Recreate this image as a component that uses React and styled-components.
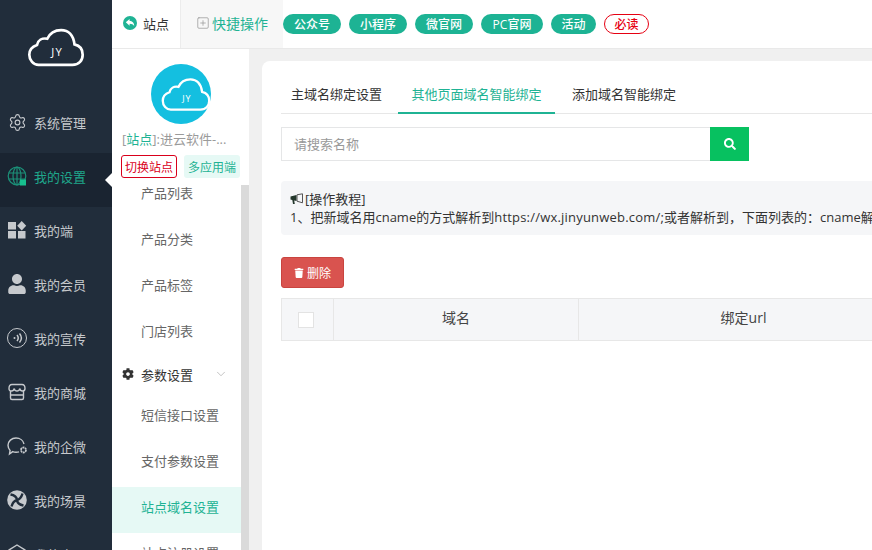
import React from 'react';
import styled, { createGlobalStyle } from 'styled-components';
import { FaCog, FaSearch, FaTrash, FaUser } from 'react-icons/fa';
import { Settings, ChevronDown, SquarePlus } from 'lucide-react';

const Global = createGlobalStyle`
  html, body { margin: 0; padding: 0; width: 872px; height: 550px; overflow: hidden; background: #f0f0f0; }
  * { box-sizing: border-box; }
  body { font-family: "Open Sans", "Noto Sans CJK SC", sans-serif; font-size: 13px; color: #333; }
`;

const Page = styled.div`display: flex; width: 872px; height: 550px; overflow: hidden;`;
const Rail = styled.aside`width: 112px; flex: none; background: #212d3b; color: #ccc; display: flex; flex-direction: column; overflow: hidden;`;
const LogoBox = styled.div`height: 99px; flex: none; display: flex; justify-content: center; align-items: flex-start; padding-top: 28px;`;
const RailItem = styled.div`
  position: relative; height: 54px; flex: none; display: flex; align-items: center; padding: 0 0 8px 7px; gap: 7px;
  background: ${p => (p.$active ? '#1a2431' : 'transparent')};
  color: ${p => (p.$active ? '#1fa88c' : '#c6c9cd')};
  ${p => p.$active && `&::after { content: ""; position: absolute; right: 0; top: 20px; border: 7px solid transparent; border-right-color: #fff; border-left-width: 0; }`}
`;
const RailIcon = styled.span`width: 20px; height: 20px; flex: none; display: flex; align-items: center; justify-content: center;`;
const RailLabel = styled.span`white-space: nowrap;`;

const Main = styled.div`flex: 1; min-width: 0; display: flex; flex-direction: column;`;
const TopBar = styled.header`height: 49px; flex: none; background: #fff; border-bottom: 1px solid #e9e9e9; display: flex; align-items: stretch;`;
const SiteTab = styled.div`width: 69px; flex: none; display: flex; align-items: center; gap: 6px; padding: 0 0 2px 11px; border-right: 1px solid #ececec; color: #333;`;
const QuickTab = styled.div`width: 102px; flex: none; background: #f7f7f7; display: flex; align-items: center; padding: 0 0 2px 15px; gap: 2px; color: #1fb394; font-size: 14px; white-space: nowrap;`;
const Pills = styled.div`display: flex; align-items: center; gap: 8px; padding-bottom: 1px;`;
const Pill = styled.span`
  height: 20px; border-radius: 10px; display: flex; align-items: center; justify-content: center; font-size: 12px; font-weight: 500; white-space: nowrap; flex: none;
  background: ${p => (p.$outline ? '#fff' : '#1db394')}; color: ${p => (p.$outline ? '#e60012' : '#fff')};
  border: ${p => (p.$outline ? '1px solid #e60012' : 'none')};
  width: ${p => p.$w}px;
`;
const Body = styled.div`flex: 1; min-height: 0; display: flex;`;
const SubNav = styled.nav`width: 137px; flex: none; background: #fff; display: flex; flex-direction: column; overflow: hidden;`;
const SubHead = styled.div`height: 136px; flex: none; padding-top: 15px; display: flex; flex-direction: column; align-items: center;`;
const Avatar = styled.div`width: 60px; height: 60px; border-radius: 50%; background: #14bfe0; display: flex; align-items: center; justify-content: flex-end; flex: none;`;
const SiteName = styled.div`width: 100%; padding-left: 10px; margin-top: 5px; line-height: 20px; color: #9a9a9a; white-space: nowrap;`;
const SiteKey = styled.span`color: #1fb394;`;
const SwitchRow = styled.div`width: 100%; display: flex; gap: 7px; padding-left: 9px; margin-top: 6px;`;
const SwitchBtn = styled.span`
  height: 23px; width: 56px; display: flex; align-items: center; justify-content: center; font-size: 12px; border-radius: 3px; flex: none;
  color: ${p => (p.$red ? '#d9001b' : '#1fb394')}; background: ${p => (p.$red ? '#fff' : '#e6f9f5')};
  border: ${p => (p.$red ? '1px solid #d9001b' : 'none')};
`;
const ScrollWrap = styled.div`flex: 1; min-height: 0; display: flex; overflow: hidden;`;
const SubList = styled.div`flex: 1; min-width: 0; margin-top: -12px;`;
const SubItem = styled.div`
  height: 46px; display: flex; align-items: center; padding: 0 0 8px 29px; color: ${p => (p.$active ? '#1fb394' : '#666')};
  background: ${p => (p.$active ? '#e6f9f5' : 'transparent')}; white-space: nowrap;
`;
const SubGroup = styled.div`
  height: 38px; display: flex; align-items: center; padding: 0 0 4px 10px; color: #333; gap: 7px; position: relative; white-space: nowrap;
`;
const GroupChevron = styled.span`position: absolute; right: 13px; top: 10px; color: #aaa; display: flex;`;
const Scrollbar = styled.div`width: 8px; flex: none; background: #dadada;`;

const Content = styled.main`flex: 1; min-width: 0; padding: 12px 0 0 13px; background: #f0f0f0; overflow: hidden;`;
const Card = styled.section`width: 660px; height: 600px; background: #fff; border-radius: 8px 0 0 0; padding: 17px 0 0 19px;`;
const TabBar = styled.div`display: flex; height: 36px; border-bottom: 1px solid #e7e7e7;`;
const TabItem = styled.div`
  flex: none; height: 36px; display: flex; align-items: center; justify-content: center; width: ${p => p.$w}px; padding-bottom: 5px; margin-right: ${p => p.$mr || 0}px;
  color: ${p => (p.$active ? '#1fb394' : '#333')}; box-shadow: ${p => (p.$active ? 'inset 0 -2px 0 #1fb394' : 'none')}; white-space: nowrap;
`;
const SearchRow = styled.div`display: flex; margin-top: 13px;`;
const SearchInput = styled.div`width: 429px; height: 34px; border: 1px solid #e5e6e7; border-right: none; color: #999; display: flex; align-items: center; padding: 0 0 2px 12px;`;
const SearchBtn = styled.div`width: 39px; height: 34px; background: #07c160; color: #fff; display: flex; align-items: center; justify-content: center;`;
const Notice = styled.div`margin-top: 20px; height: 54px; background: #f5f6f8; padding: 9px 0 0 9px; line-height: 18px; white-space: nowrap; overflow: hidden; border-radius: 4px 0 0 4px; color: #333;`;
const NoticeTitle = styled.div`display: flex; align-items: center;`;
const Url = styled.span`letter-spacing: 0.2px;`;
const Del = styled.div`margin-top: 22px; width: 63px; height: 31px; background: #d9534f; border: 1px solid #c9443f; border-radius: 3px; color: #fff; font-size: 12px; display: flex; align-items: center; justify-content: center; gap: 3px;`;
const TableHead = styled.div`margin-top: 10px; display: flex; height: 43px; background: #f5f6f8; border-top: 1px solid #e7e7e7; border-bottom: 1px solid #e7e7e7; font-size: 14px; color: #444;`;
const CheckCell = styled.div`flex: none; width: 53px; display: flex; align-items: center; justify-content: center; padding-right: 4px; border-left: 1px solid #e7e7e7; border-right: 1px solid #e7e7e7;`;
const Cell = styled.div`flex: none; width: ${p => p.$w}px; display: flex; align-items: center; justify-content: center; padding-bottom: 5px; border-right: 1px solid #e7e7e7;`;
const Check = styled.span`width: 16px; height: 16px; background: #fff; border: 1px solid #e3e3e3;`;

const Cloud = ({ w, h, size = 10 }) => (
  <svg width={w} height={h} viewBox="0 0 56 38" fill="none">
    <path d="M11 36h33c6.500 0 10-4.500 10-10 0-5.500-3.500-9-8-10C45 7 40 2 33 2c-6 0-11 3-13.500 8.500-5-1-9 1.500-10 6C5 18 2 21.500 2 26c0 5.500 4 10 9 10z" stroke="#fff" strokeWidth="2.600" />
    <text x="29" y="27" textAnchor="middle" fontSize={size} fill="#fff" fontFamily="Open Sans, sans-serif" letterSpacing="1">JY</text>
  </svg>
);

const BackIcon = () => (
  <svg width="14" height="14" viewBox="0 0 14 14">
    <circle cx="7" cy="7" r="7" fill="#1fb394" />
    <path d="M2.800 6.200 6.600 3v2.100c2.600 0 4.600 1.500 4.600 5-1-1.700-2.400-2.400-4.600-2.400v2z" fill="#fff" />
  </svg>
);

const Megaphone = () => (
  <svg width="15" height="12" viewBox="0 0 15 12">
    <path d="M.500 3.500 6.500 2v6L4.200 7.500 4.800 11 3 11 2.300 7 .500 6.500z" fill="#24382c" />
    <path d="M7 1.800 12.500 .8v9L7 8.200z" fill="none" stroke="#555" strokeWidth="1" />
  </svg>
);

const stroke = { fill: 'none', stroke: 'currentColor', strokeWidth: 1.400 };
const icons = {
  gear: <Settings size={19} strokeWidth={1.400} />,
  globe: (
    <svg width="20" height="20" viewBox="0 0 20 20" fill="none" stroke="#1c8f78" strokeWidth="1.200">
      <circle cx="10" cy="10" r="8.800" />
      <ellipse cx="10" cy="10" rx="4" ry="8.800" />
      <path d="M1.500 7h17M1.500 13h17M10 1v18" />
      <path d="M13 13.500h6v6h-6z" fill="#17c08e" stroke="none" />
    </svg>
  ),
  apps: (
    <svg width="20" height="20" viewBox="0 0 20 20" fill="currentColor">
      <rect x="1" y="2" width="8" height="7.500" /><rect x="1" y="11" width="8" height="7.500" /><rect x="11" y="11" width="7.500" height="7.500" />
      <path d="M14.700 1l4.500 4.700-4.500 4.700-4.500-4.700z" />
    </svg>
  ),
  user: <FaUser size={20} />,
  wave: (
    <svg width="20" height="20" viewBox="0 0 20 20" {...stroke}>
      <circle cx="10" cy="10" r="9.500" strokeWidth="1" />
      <circle cx="7.500" cy="10" r="1" fill="currentColor" stroke="none" />
      <path d="M10 7c1.500 1.800 1.500 4.200 0 6M12.500 5.500c2.300 2.700 2.300 6.300 0 9" strokeWidth="1.500" />
    </svg>
  ),
  shop: (
    <svg width="18" height="18" viewBox="0 0 18 18" {...stroke}>
      <path d="M4 1.500h10c2 0 3 2 3 4s-1 2.500-2.500 2.500S12 7 11.700 5.500C11.500 7 10.500 8 9 8S6.500 7 6.300 5.500C6 7 5 8 3.500 8S1 7.500 1 5.500s1-4 3-4z" />
      <path d="M2.500 8v7c0 .800.500 1.500 1.500 1.500h10c1 0 1.500-.7 1.500-1.500V8M2.500 12h13" />
    </svg>
  ),
  chat: (
    <svg width="22" height="20" viewBox="0 0 22 20" {...stroke} style={{ marginLeft: 2, flex: 'none' }}>
      <path d="M12 15.800c-.9.300-1.900.400-3 .400-1.200 0-2.300-.2-3.300-.6L2.500 18l.6-3.600C1.800 13 1 11.300 1 9.300 1 5.200 4.600 2 9 2c4 0 7.300 2.500 8 6" />
      <circle cx="16.500" cy="14" r="2.500" strokeWidth="1.800" strokeDasharray="2 .6" />
    </svg>
  ),
  scene: (
    <svg width="20" height="20" viewBox="0 0 20 20">
      <circle cx="10" cy="10" r="9.800" fill="currentColor" />
      <path d="M3.500 4.500Q9.500 5.500 10 10t6.500 5.500M15.500 3.500Q14 9 10 10t-5.500 6.500" fill="none" stroke="#212d3b" strokeWidth="2.400" />
    </svg>
  ),
  cube: (
    <svg width="20" height="20" viewBox="0 0 20 20" {...stroke}><path d="M10 1l8 5v8l-8 5-8-5V6z" /></svg>
  ),
};

const railItems = [
  ['gear', '系统管理'], ['globe', '我的设置', true], ['apps', '我的端'], ['user', '我的会员'], ['wave', '我的宣传'],
  ['shop', '我的商城'], ['chat', '我的企微'], ['scene', '我的场景'], ['cube', '我的应用'],
];

export default function App() {
  return (
    <Page>
      <Global />
      <Rail>
        <LogoBox><Cloud w={58} h={39} size={11} /></LogoBox>
        {railItems.map(([ic, label, active]) => (
          <RailItem key={label} $active={active}>
            <RailIcon>{icons[ic]}</RailIcon>
            <RailLabel>{label}</RailLabel>
          </RailItem>
        ))}
      </Rail>
      <Main>
        <TopBar>
          <SiteTab><BackIcon /><span>站点</span></SiteTab>
          <QuickTab><SquarePlus size={14} color="#999" strokeWidth={1.300} /><span>快捷操作</span></QuickTab>
          <Pills>
            <Pill $w={58}>公众号</Pill><Pill $w={58}>小程序</Pill><Pill $w={58}>微官网</Pill><Pill $w={62}>PC官网</Pill><Pill $w={45}>活动</Pill><Pill $w={45} $outline>必读</Pill>
          </Pills>
        </TopBar>
        <Body>
          <SubNav>
            <SubHead>
              <Avatar><Cloud w={50} h={35} /></Avatar>
              <SiteName>[<SiteKey>站点</SiteKey>]:进云软件-...</SiteName>
              <SwitchRow>
                <SwitchBtn $red>切换站点</SwitchBtn>
                <SwitchBtn>多应用端</SwitchBtn>
              </SwitchRow>
            </SubHead>
            <ScrollWrap>
              <SubList>
                <SubItem>产品列表</SubItem>
                <SubItem>产品分类</SubItem>
                <SubItem>产品标签</SubItem>
                <SubItem>门店列表</SubItem>
                <SubGroup>
                  <FaCog size={12} />
                  <span>参数设置</span>
                  <GroupChevron><ChevronDown size={14} strokeWidth={1.200} /></GroupChevron>
                </SubGroup>
                <SubItem>短信接口设置</SubItem>
                <SubItem>支付参数设置</SubItem>
                <SubItem $active>站点域名设置</SubItem>
                <SubItem>站点注册设置</SubItem>
              </SubList>
              <Scrollbar />
            </ScrollWrap>
          </SubNav>
          <Content>
            <Card>
              <TabBar>
                <TabItem $w={111} $mr={6}>主域名绑定设置</TabItem>
                <TabItem $w={157} $active>其他页面域名智能绑定</TabItem>
                <TabItem $w={138}>添加域名智能绑定</TabItem>
              </TabBar>
              <SearchRow>
                <SearchInput>请搜索名称</SearchInput>
                <SearchBtn><FaSearch size={12} /></SearchBtn>
              </SearchRow>
              <Notice>
                <NoticeTitle><Megaphone /><span>[操作教程]</span></NoticeTitle>
                <div>1、把新域名用cname的方式解析到<Url>https://wx.jinyunweb.com/;</Url>或者解析到，下面列表的：cname解析值，即可完成域名绑定</div>
              </Notice>
              <Del><FaTrash size={10} />删除</Del>
              <TableHead>
                <CheckCell><Check /></CheckCell>
                <Cell $w={245}>域名</Cell>
                <Cell $w={330}>绑定url</Cell>
              </TableHead>
            </Card>
          </Content>
        </Body>
      </Main>
    </Page>
  );
}
